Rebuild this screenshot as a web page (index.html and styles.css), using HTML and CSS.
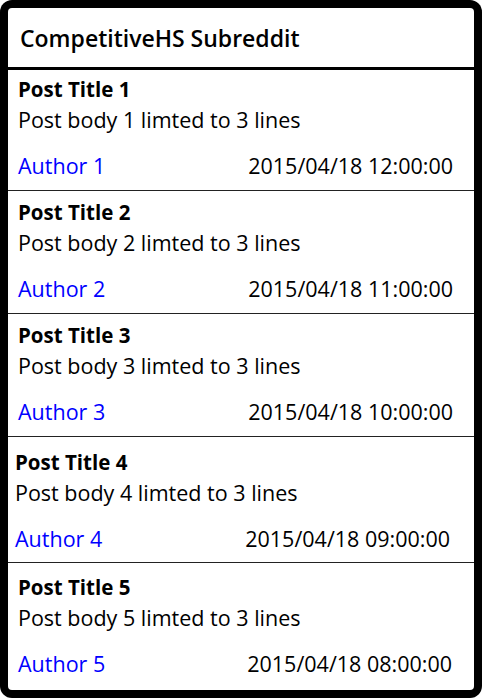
FILE: index.html
```html
<!DOCTYPE html>
<html>
<head>
<meta charset="utf-8">
<link rel="stylesheet" href="styles.css">
</head>
<body>
<div class="frame">
  <div class="screen">
    <header class="app-header">CompetitiveHS Subreddit</header>
    <ul class="post-list">
      <li class="post post--1">
        <div class="post-title">Post Title 1</div>
        <div class="post-body">Post body 1 limted to 3 lines</div>
        <div class="post-meta"><span class="post-author">Author 1</span><span class="post-date">2015/04/18 12:00:00</span></div>
      </li>
      <li class="post post--2">
        <div class="post-title">Post Title 2</div>
        <div class="post-body">Post body 2 limted to 3 lines</div>
        <div class="post-meta"><span class="post-author">Author 2</span><span class="post-date">2015/04/18 11:00:00</span></div>
      </li>
      <li class="post post--3">
        <div class="post-title">Post Title 3</div>
        <div class="post-body">Post body 3 limted to 3 lines</div>
        <div class="post-meta"><span class="post-author">Author 3</span><span class="post-date">2015/04/18 10:00:00</span></div>
      </li>
      <li class="post post--4">
        <div class="post-title">Post Title 4</div>
        <div class="post-body">Post body 4 limted to 3 lines</div>
        <div class="post-meta"><span class="post-author">Author 4</span><span class="post-date">2015/04/18 09:00:00</span></div>
      </li>
      <li class="post post--5">
        <div class="post-title">Post Title 5</div>
        <div class="post-body">Post body 5 limted to 3 lines</div>
        <div class="post-meta"><span class="post-author">Author 5</span><span class="post-date">2015/04/18 08:00:00</span></div>
      </li>
    </ul>
  </div>
</div>
</body>
</html>
```

FILE: styles.css
```css
* { box-sizing: border-box; }
html, body {
  margin: 0;
  padding: 0;
  background: #fff;
}
body {
  font-family: "Open Sans", "DejaVu Sans", sans-serif;
  color: #000;
}
.frame {
  width: 482px;
  height: 698px;
  background: #000;
  border-radius: 12px;
  padding: 8px;
}
.screen {
  background: #fff;
  border-radius: 4px;
  height: 100%;
  overflow: hidden;
  display: flex;
  flex-direction: column;
}
.app-header {
  height: 62px;
  border-bottom: 3px solid #000;
  display: flex;
  align-items: center;
  padding-left: 12px;
  font-size: 23px;
  font-weight: 600;
}
.post-list {
  list-style: none;
  margin: 0;
  padding: 0;
}
.post {
  padding: 9px 21px 12px 10px;
  border-bottom: 1px solid #222;
}
.post:last-child { border-bottom: none; }
.post-title {
  font-size: 20.5px;
  font-weight: 700;
  line-height: 24px;
}
.post-body {
  font-size: 21.5px;
  line-height: 24px;
  margin-top: 7px;
}
.post-meta {
  display: flex;
  justify-content: space-between;
  font-size: 21.5px;
  line-height: 24px;
  margin-top: 22px;
}
.post-author { color: #0000ff; }
.post--1 { padding-top: 7px; padding-bottom: 12px; }
.post--4 { padding: 13px 24px 11px 7px; }
.post--5 { padding: 12px 22px 12px 10px; }
```
